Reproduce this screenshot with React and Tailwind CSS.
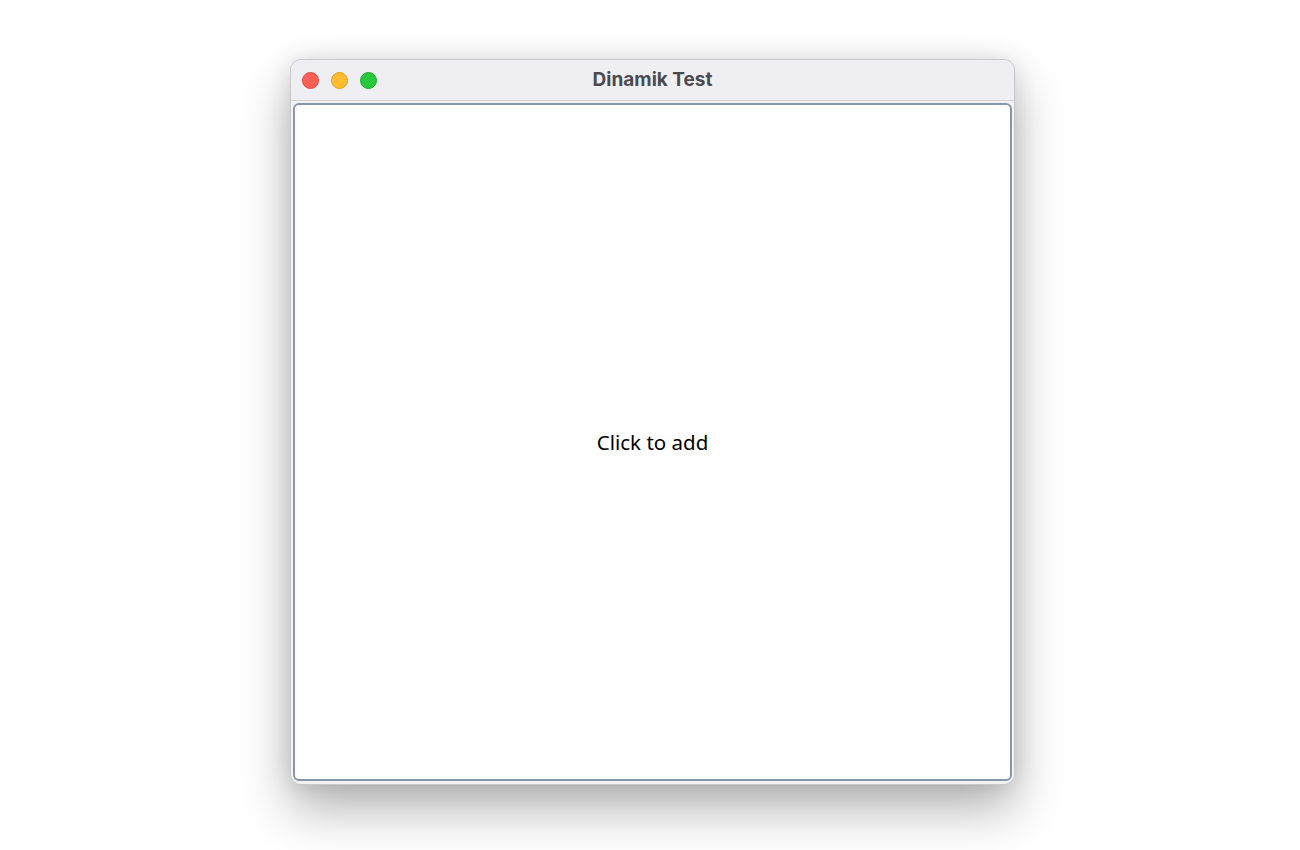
export default function App() {
  return (
    <div className="w-[1300px] h-[850px] bg-white overflow-hidden" style={{ fontFamily: '"Open Sans", "Noto Sans", sans-serif' }}>
      <div className="pt-[59px] pl-[290px]">
        <div className="w-[725px] h-[726px] rounded-[11px] bg-[#ececec] border border-[#c8c8c8] shadow-[0_24px_50px_rgba(0,0,0,0.3),0_0_22px_rgba(0,0,0,0.1)] flex flex-col overflow-hidden">
          <div className="relative h-[41px] bg-[#efeff3] border-b border-[#d4d4d8] flex items-center shrink-0">
            <div className="flex items-center gap-[12px] pl-[11px]">
              <div className="w-[17px] h-[17px] rounded-full bg-[#fe5f57] border border-[#e2463f]" />
              <div className="w-[17px] h-[17px] rounded-full bg-[#febc2e] border border-[#e1a116]" />
              <div className="w-[17px] h-[17px] rounded-full bg-[#28c840] border border-[#1aab29]" />
            </div>
            <div className="absolute inset-0 flex items-center justify-center pointer-events-none">
              <span className="text-[19px] font-bold text-[#4b4b4f]" style={{ fontFamily: 'Inter, "Liberation Sans", sans-serif' }}>Dinamik Test</span>
            </div>
          </div>
          <div className="flex-1 px-[2px] pt-[2px] pb-[3px] bg-[#f2f2f2]">
            <div className="w-full h-full bg-white border-2 border-[#8796ab] rounded-[6px] flex items-center justify-center">
              <span className="text-[20.5px] text-black" style={{ fontFamily: '"Noto Sans", "Open Sans", sans-serif' }}>Click to add</span>
            </div>
          </div>
        </div>
      </div>
    </div>
  );
}
